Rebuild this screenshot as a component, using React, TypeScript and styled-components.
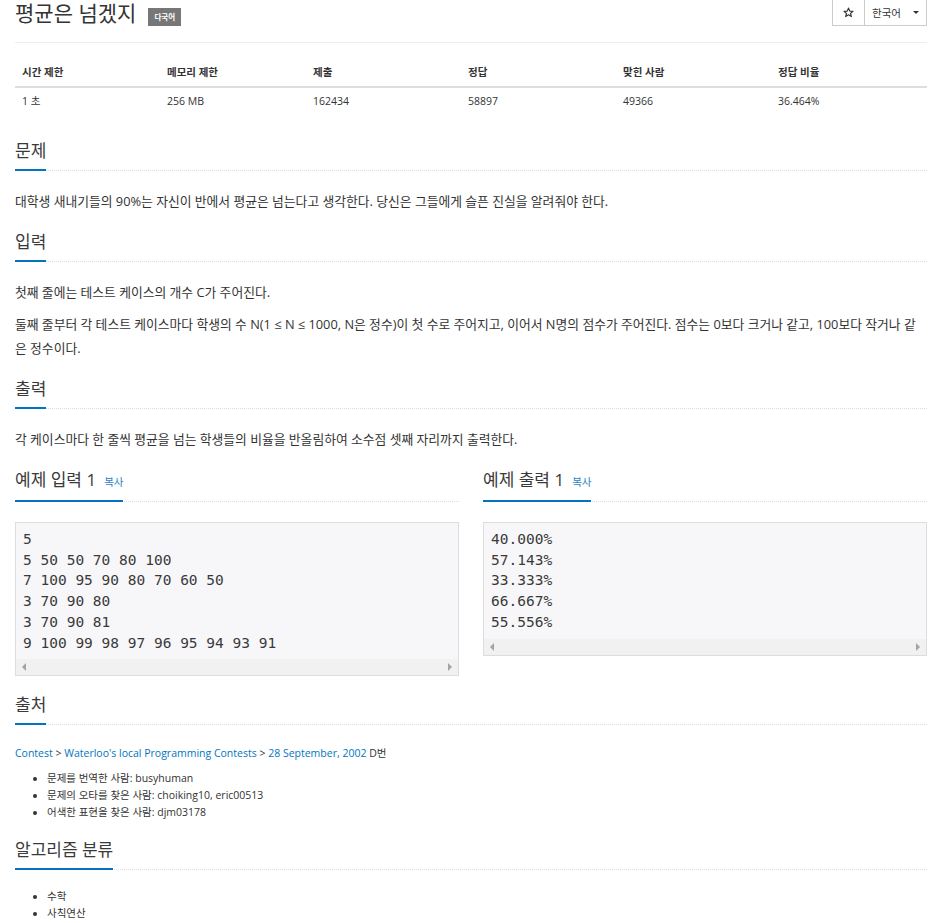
import React from 'react'
import styled, { createGlobalStyle } from 'styled-components'

const GlobalStyle = createGlobalStyle`
  * { box-sizing: border-box; }
  body {
    margin: 0;
    background: #fff;
    color: #333;
    font-family: "Open Sans", "Noto Sans CJK KR", sans-serif;
    font-size: 10.5px;
  }
`

const Page = styled.main`
  width: 943px;
  padding: 0 16px 0 15px;
`

const PageHeader = styled.header`
  display: flex;
  justify-content: space-between;
  align-items: flex-start;
  height: 43px;
  border-bottom: 1px solid #eee;
`

const Title = styled.h1`
  display: flex;
  align-items: flex-end;
  margin: 0;
  font-size: 21px;
  font-weight: 400;
  line-height: 26px;
  color: #333;
`

const Badge = styled.span`
  display: inline-flex;
  align-items: center;
  height: 18px;
  margin-left: 12px;
  padding: 0 6px;
  background: #777;
  color: #fff;
  font-size: 7.5px;
  font-weight: 700;
`

const ButtonGroup = styled.div`
  display: flex;
  height: 26px;
  border: 1px solid #ccc;
  border-top: 0;
`

const GroupButton = styled.button<{ $w: number }>`
  display: flex;
  align-items: center;
  justify-content: center;
  gap: 12px;
  width: ${(p) => p.$w}px;
  padding: 0;
  border: 0;
  background: #fff;
  color: #333;
  font: inherit;
  font-size: 10.5px;
  & + & {
    border-left: 1px solid #ccc;
  }
`

const Caret = styled.span`
  width: 0;
  height: 0;
  border-top: 3px solid #333;
  border-left: 3px solid transparent;
  border-right: 3px solid transparent;
`

const Stats = styled.table`
  width: 100%;
  margin: 16px 0 27px;
  border-collapse: collapse;
  table-layout: fixed;
`

const Th = styled.th<{ $w?: number }>`
  width: ${(p) => (p.$w ? `${p.$w}px` : 'auto')};
  padding: 6px 7px;
  text-align: left;
  font-weight: 700;
  line-height: 15px;
  border-bottom: 2px solid #ddd;
`

const Td = styled.td`
  padding: 6px 7px;
  line-height: 15px;
`

const Section = styled.section`
  margin-bottom: 20px;
`

const Headline = styled.div<{ $gap?: number }>`
  display: flex;
  align-items: flex-end;
  margin-bottom: ${(p) => p.$gap ?? 18}px;
  border-bottom: 1px dotted #ddd;
`

const HeadTitle = styled.h2`
  display: flex;
  align-items: baseline;
  margin: 0 0 -1px;
  padding-bottom: 9px;
  font-size: 17px;
  font-weight: 400;
  line-height: 18px;
  color: #3a3a3a;
  border-bottom: 2px solid #0076c0;
`

const CopyLink = styled.a`
  margin-left: 8px;
  font-size: 10.5px;
  color: #2a7fc4;
  text-decoration: none;
`

const Text = styled.p`
  margin: 0;
  font-size: 12.8px;
  line-height: 24px;
  word-break: break-all;
  & + & {
    margin-top: 8px;
  }
`

const Samples = styled.div`
  display: grid;
  grid-template-columns: 1fr 1fr;
  gap: 24px;
  align-items: start;
`

const SampleBox = styled.div`
  border: 1px solid #ddd;
  background: #f7f7f9;
`

const Pre = styled.pre`
  margin: 0;
  padding: 6px 7px;
  font-family: "DejaVu Sans Mono", monospace;
  font-size: 14.5px;
  line-height: 20.7px;
  color: #3a3a3a;
`

const ScrollTrack = styled.div`
  display: flex;
  align-items: center;
  justify-content: space-between;
  height: 16px;
  padding: 0 6px;
  background: #f1f1f1;
`

const Arrow = styled.span<{ $dir: 'left' | 'right' }>`
  width: 0;
  height: 0;
  border-top: 4px solid transparent;
  border-bottom: 4px solid transparent;
  ${(p) =>
    p.$dir === 'left'
      ? 'border-right: 4px solid #a3a3a3;'
      : 'border-left: 4px solid #a3a3a3;'}
`

const SourceLine = styled.p`
  margin: 0;
  padding-top: 2px;
  line-height: 17px;
  a {
    color: #0076c0;
    text-decoration: none;
  }
`

const List = styled.ul<{ $top?: number }>`
  margin: ${(p) => p.$top ?? 0}px 0 0;
  padding-left: 32px;
  li {
    line-height: 17px;
  }
`

const stats = [
  { label: '시간 제한', value: '1 초', w: 145 },
  { label: '메모리 제한', value: '256 MB', w: 146 },
  { label: '제출', value: '162434', w: 155 },
  { label: '정답', value: '58897', w: 155 },
  { label: '맞힌 사람', value: '49366', w: 155 },
  { label: '정답 비율', value: '36.464%' },
]

const sampleIn = `5
5 50 50 70 80 100
7 100 95 90 80 70 60 50
3 70 90 80
3 70 90 81
9 100 99 98 97 96 95 94 93 91`

const sampleOut = `40.000%
57.143%
33.333%
66.667%
55.556%`

function StarIcon() {
  return (
    <svg width="11" height="11" viewBox="0 0 24 24" fill="none" stroke="#333" strokeWidth="2.6" strokeLinejoin="round">
      <polygon points="12,2.5 14.9,9 21.8,9.4 16.5,13.9 18.2,20.8 12,17.1 5.8,20.8 7.5,13.9 2.2,9.4 9.1,9" />
    </svg>
  )
}

function Sample({ title, text }: { title: string; text: string }) {
  return (
    <div>
      <Headline $gap={20}>
        <HeadTitle>
          {title}
          <CopyLink href="#">복사</CopyLink>
        </HeadTitle>
      </Headline>
      <SampleBox>
        <Pre>{text}</Pre>
        <ScrollTrack>
          <Arrow $dir="left" />
          <Arrow $dir="right" />
        </ScrollTrack>
      </SampleBox>
    </div>
  )
}

export default function App() {
  return (
    <Page>
      <GlobalStyle />
      <PageHeader>
        <Title>
          평균은 넘겠지
          <Badge>다국어</Badge>
        </Title>
        <ButtonGroup>
          <GroupButton $w={31}>
            <StarIcon />
          </GroupButton>
          <GroupButton $w={62}>
            한국어
            <Caret />
          </GroupButton>
        </ButtonGroup>
      </PageHeader>

      <Stats>
        <thead>
          <tr>
            {stats.map((s) => (
              <Th key={s.label} $w={s.w}>
                {s.label}
              </Th>
            ))}
          </tr>
        </thead>
        <tbody>
          <tr>
            {stats.map((s) => (
              <Td key={s.label}>{s.value}</Td>
            ))}
          </tr>
        </tbody>
      </Stats>

      <Section>
        <Headline>
          <HeadTitle>문제</HeadTitle>
        </Headline>
        <Text>대학생 새내기들의 90%는 자신이 반에서 평균은 넘는다고 생각한다. 당신은 그들에게 슬픈 진실을 알려줘야 한다.</Text>
      </Section>

      <Section>
        <Headline>
          <HeadTitle>입력</HeadTitle>
        </Headline>
        <Text>첫째 줄에는 테스트 케이스의 개수 C가 주어진다.</Text>
        <Text>
          둘째 줄부터 각 테스트 케이스마다 학생의 수 N(1 ≤ N ≤ 1000, N은 정수)이 첫 수로 주어지고, 이어서 N명의 점수가
          주어진다. 점수는 0보다 크거나 같고, 100보다 작거나 같은 정수이다.
        </Text>
      </Section>

      <Section>
        <Headline>
          <HeadTitle>출력</HeadTitle>
        </Headline>
        <Text>각 케이스마다 한 줄씩 평균을 넘는 학생들의 비율을 반올림하여 소수점 셋째 자리까지 출력한다.</Text>
      </Section>

      <Section>
        <Samples>
          <Sample title="예제 입력 1" text={sampleIn} />
          <Sample title="예제 출력 1" text={sampleOut} />
        </Samples>
      </Section>

      <Section>
        <Headline>
          <HeadTitle>출처</HeadTitle>
        </Headline>
        <SourceLine>
          <a href="#">Contest</a> &gt; <a href="#">Waterloo's local Programming Contests</a> &gt;{' '}
          <a href="#">28 September, 2002</a> D번
        </SourceLine>
        <List $top={8}>
          <li>문제를 번역한 사람: busyhuman</li>
          <li>문제의 오타를 찾은 사람: choiking10, eric00513</li>
          <li>어색한 표현을 찾은 사람: djm03178</li>
        </List>
      </Section>

      <Section>
        <Headline>
          <HeadTitle>알고리즘 분류</HeadTitle>
        </Headline>
        <List>
          <li>수학</li>
          <li>사칙연산</li>
        </List>
      </Section>
    </Page>
  )
}
